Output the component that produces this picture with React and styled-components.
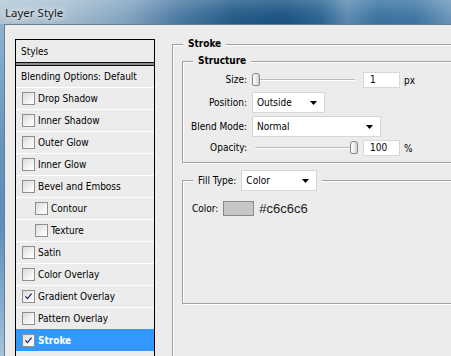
import React from 'react';
import styled, { createGlobalStyle } from 'styled-components';

const Global = createGlobalStyle`
  html, body { margin: 0; padding: 0; }
  body {
    width: 451px; height: 356px; overflow: hidden; background: #ececec;
    font-family: "DejaVu Sans Condensed", "DejaVu Sans", sans-serif;
    font-stretch: semi-condensed;
  }
  #root { width: 451px; height: 356px; }
`;

const Window = styled.div`
  width: 451px; height: 356px; display: flex; flex-direction: column; overflow: hidden;
`;

const TitleBar = styled.div`
  flex: 0 0 24px; height: 24px; box-sizing: border-box;
  display: flex; align-items: center; padding-left: 5px;
  background:
    linear-gradient(180deg, rgba(255,255,255,0.18) 0%, rgba(255,255,255,0.04) 55%, rgba(0,0,0,0.04) 100%),
    linear-gradient(90deg, #b4c8d7 0%, #a7bfd1 14%, #84a6c2 28%, #4a7aa2 40%, #235b88 52%, #1b5383 63%, #2b6592 71%, #5c8bb1 77%, #3b73a1 84%, #3f77a4 92%, #6b97bb 100%);
`;

const TitleText = styled.span`
  font-family: "Noto Sans", "Liberation Sans", sans-serif;
  font-size: 11.5px; color: #1b1b1b; font-stretch: normal;
  text-shadow: 0 0 6px #fff, 0 0 10px rgba(255,255,255,0.9);
`;

const Frame = styled.div`
  flex: 1; display: flex; min-height: 0; padding-left: 4px;
  background: linear-gradient(180deg, #8db2cf 0%, #6595bf 35%, #5b8ebc 60%, #86add0 85%, #a3c2db 100%);
`;

const Client = styled.div`
  flex: 1; display: flex; align-items: flex-start; gap: 17px; min-width: 0; overflow: hidden;
  background: #ececec; border-top: 1px solid #6a7c8b; border-left: 1px solid #6a7c8b;
  padding: 13px 0 0 10px;
`;

const StyleList = styled.div`
  flex: 0 0 140px; width: 140px; min-height: 340px; margin-top: 1px; box-sizing: border-box;
  border: 1px solid #000; border-bottom: none;
  display: flex; flex-direction: column; font-size: 10px; color: #000;
`;

const ListHeader = styled.div`
  height: 22px; display: flex; align-items: center; padding-left: 5px;
`;

const HeaderRule = styled.div`
  height: 2px; background: #8c8c8c; border-top: 1px solid #111; border-bottom: 1px solid #111;
`;

const OptionsRow = styled.div`
  height: 21px; display: flex; align-items: center; padding-left: 5px;
`;

const Row = styled.div`
  height: 22px; box-sizing: border-box; display: flex; align-items: center; gap: 3px;
  padding-left: ${p => (p.$indent ? 19 : 6)}px;
  border-top: 1px solid ${p => (p.$selected ? '#3399ff' : '#ffffff')};
  background: ${p => (p.$selected ? '#3399ff' : 'transparent')};
  color: ${p => (p.$selected ? '#fff' : '#000')};
  font-weight: ${p => (p.$selected ? 'bold' : 'normal')};
`;

const CheckBox = styled.span`
  width: 13px; height: 13px; box-sizing: border-box; flex: none;
  border: 1px solid #8e8f8f;
  background: linear-gradient(135deg, #d9d9d4 0%, #f4f4f2 60%, #ffffff 100%);
  display: inline-flex; align-items: center; justify-content: center;
`;

const Panel = styled.div`
  flex: 0 0 300px; font-size: 10px; color: #000;
`;

const Group = styled.fieldset`
  margin: 0; padding: 0; min-width: 0;
  border: 1px solid #a0a0a0;
  box-shadow: inset 1px 1px 0 #fff, 1px 1px 0 #fff;
  & + & { margin-top: 7px; }
`;

const Legend = styled.legend`
  margin-left: 10px; padding: 0 5px; background: #ececec;
  font-weight: ${p => (p.$bold ? 'bold' : 'normal')};
  line-height: 12px;
`;

const LegendInner = styled.span`
  display: flex; align-items: center; gap: 5px;
`;

const OuterBody = styled.div`
  padding: 5px 0 0 9px; height: 360px;
`;

const StructureBody = styled.div`
  display: grid; grid-template-columns: 64px auto; column-gap: 5px; row-gap: 3px;
  grid-template-rows: 17px 21px 21px 16px; align-items: start;
  padding: 5px 0 6px 0;
`;

const Label = styled.span`
  justify-self: end; align-self: ${p => (p.$mid ? 'center' : 'start')};
  line-height: 16px; white-space: nowrap;
`;

const Controls = styled.div`
  display: flex; align-items: center;
`;

const Slider = styled.div`
  position: relative; width: 106px; height: 14px; flex: none; margin-right: 5px;
`;

const Track = styled.div`
  position: absolute; left: 3px; right: 3px; top: 6px; height: 1px;
  background: #bcbcbc; border-bottom: 1px solid #fff;
`;

const Thumb = styled.div`
  position: absolute; top: 0; width: 8px; height: 13px; box-sizing: border-box;
  border: 1px solid #858585; border-radius: 3px 3px 2px 2px;
  background: linear-gradient(90deg, #ffffff 0%, #ececec 50%, #d0d0d0 100%);
`;

const NumberBox = styled.div`
  width: 37px; height: 16px; box-sizing: border-box; background: #fff;
  border: 1px solid #d8d8d8; padding-left: 6px; line-height: 14px; flex: none;
`;

const Unit = styled.span`
  margin-left: 4px;
`;

const Select = styled.div`
  width: ${p => p.$w}px; height: 21px; box-sizing: border-box; background: #fff;
  border: 1px solid #d6d6d6; display: flex; align-items: center; justify-content: space-between;
  padding: 0 7px 0 4px; font-weight: normal;
`;

const FillBody = styled.div`
  height: 112px; box-sizing: border-box; padding: 10px 0 0 9px;
  display: flex; align-items: center; align-content: flex-start; flex-wrap: wrap;
`;

const ColorRow = styled.div`
  display: flex; align-items: center; height: 15px;
`;

const Swatch = styled.div`
  width: 31px; height: 15px; box-sizing: border-box; margin-left: 5px;
  border: 1px solid #8a8a8a; background: #c6c6c6;
`;

const Hex = styled.span`
  margin-left: 5px; font-family: "Liberation Sans", Arial, sans-serif; font-stretch: normal;
  font-size: 13px; color: #1c1c1c;
`;

const Check = () => (
  <svg width="9" height="9" viewBox="0 0 9 9">
    <path d="M1.5 4.3 L3.5 6.6 L7.6 1.6" fill="none" stroke="#1f2468" strokeWidth="1.25" />
  </svg>
);

const Arrow = () => (
  <svg width="7" height="4" viewBox="0 0 7 4">
    <path d="M0 0 H7 L3.5 4 Z" fill="#000" />
  </svg>
);

const effects = [
  { label: 'Drop Shadow' },
  { label: 'Inner Shadow' },
  { label: 'Outer Glow' },
  { label: 'Inner Glow' },
  { label: 'Bevel and Emboss' },
  { label: 'Contour', indent: true },
  { label: 'Texture', indent: true },
  { label: 'Satin' },
  { label: 'Color Overlay' },
  { label: 'Gradient Overlay', checked: true },
  { label: 'Pattern Overlay' },
  { label: 'Stroke', checked: true, selected: true },
];

const SliderControl = ({ value }) => (
  <Slider>
    <Track />
    <Thumb style={{ left: `${(value / 100) * 98}px` }} />
  </Slider>
);

export default function App() {
  return (
    <Window>
      <Global />
      <TitleBar>
        <TitleText>Layer Style</TitleText>
      </TitleBar>
      <Frame>
        <Client>
          <StyleList>
            <ListHeader>Styles</ListHeader>
            <HeaderRule />
            <OptionsRow>Blending Options: Default</OptionsRow>
            {effects.map(e => (
              <Row key={e.label} $indent={e.indent} $selected={e.selected}>
                <CheckBox>{e.checked && <Check />}</CheckBox>
                <span>{e.label}</span>
              </Row>
            ))}
          </StyleList>
          <Panel>
            <Group>
              <Legend $bold>Stroke</Legend>
              <OuterBody>
                <Group>
                  <Legend $bold>Structure</Legend>
                  <StructureBody>
                    <Label>Size:</Label>
                    <Controls>
                      <SliderControl value={0} />
                      <NumberBox>1</NumberBox>
                      <Unit>px</Unit>
                    </Controls>
                    <Label $mid>Position:</Label>
                    <Select $w={73}>Outside<Arrow /></Select>
                    <Label $mid>Blend Mode:</Label>
                    <Select $w={129}>Normal<Arrow /></Select>
                    <Label>Opacity:</Label>
                    <Controls>
                      <SliderControl value={100} />
                      <NumberBox>100</NumberBox>
                      <Unit>%</Unit>
                    </Controls>
                  </StructureBody>
                </Group>
                <Group>
                  <Legend>
                    <LegendInner>
                      Fill Type:
                      <Select $w={76}>Color<Arrow /></Select>
                    </LegendInner>
                  </Legend>
                  <FillBody>
                    <ColorRow>
                      Color:
                      <Swatch />
                      <Hex>#c6c6c6</Hex>
                    </ColorRow>
                  </FillBody>
                </Group>
              </OuterBody>
            </Group>
          </Panel>
        </Client>
      </Frame>
    </Window>
  );
}
